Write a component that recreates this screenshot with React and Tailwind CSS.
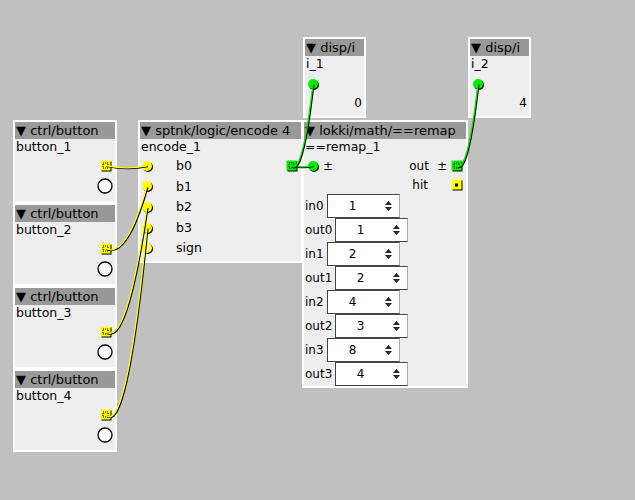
import React from 'react';

const YELLOW = '#ffff00';
const GREEN = '#00ee00';

// inlet: round jack with a dark drop shadow
function Inlet({ color, open }) {
  return (
    <svg width="13" height="13" className="shrink-0">
      <circle cx="7" cy="7" r="5" fill="#000" />
      <circle cx="6" cy="6" r="5" fill={color} />
      {open && <circle cx="6.3" cy="6.3" r="2.6" fill="#eeeeee" />}
    </svg>
  );
}

// outlet: square jack, dotted when connected
function Outlet({ color, open }) {
  return (
    <svg width="12" height="12" className="shrink-0">
      <rect x="1.5" y="1.5" width="10" height="10" fill="#000" />
      <rect x="0.5" y="0.5" width="10" height="10" fill={color} />
      {open ? (
        <rect x="4" y="4.5" width="3" height="3" fill="#000" />
      ) : (
        <rect x="3" y="3" width="5" height="5" fill="none" stroke="#000" strokeWidth="1" strokeDasharray="1 1" />
      )}
    </svg>
  );
}

function ButtonCircle() {
  return (
    <svg width="16" height="16" className="shrink-0">
      <circle cx="8" cy="8" r="7" fill="#fff" stroke="#000" strokeWidth="1.3" />
    </svg>
  );
}

function Spinner() {
  return (
    <svg width="9" height="12">
      <polygon points="1,5 8,5 4.5,1" fill="#222" />
      <polygon points="1,7 8,7 4.5,11" fill="#222" />
    </svg>
  );
}

function Node({ pos, title, name, children }) {
  return (
    <div className={`absolute flex flex-col border-2 border-white bg-[#eeeeee] ${pos}`}>
      <div className="h-[17px] shrink-0 bg-[#999999] flex items-center pl-[1px] text-[13px] whitespace-nowrap overflow-hidden">
        ▼ {title}
      </div>
      <div className="h-[17px] shrink-0 flex items-center pl-[1px] text-[12.5px] whitespace-nowrap">{name}</div>
      {children}
    </div>
  );
}

function CtrlButton({ pos, name }) {
  return (
    <Node pos={pos} title="ctrl/button" name={name}>
      <div className="h-[20px] flex items-center justify-end pr-[3px]">
        <Outlet color={YELLOW} />
      </div>
      <div className="h-[20px] flex items-center justify-end pr-[2px]">
        <ButtonCircle />
      </div>
    </Node>
  );
}

function DispI({ pos, name, value }) {
  return (
    <Node pos={pos} title="disp/i" name={name}>
      <div className="h-[22px] flex items-center pl-[2px]">
        <Inlet color={GREEN} />
      </div>
      <div className="h-[16px] flex items-center justify-end pr-[2px]">{value}</div>
    </Node>
  );
}

function ParamRow({ label, value, wide }) {
  return (
    <div className="h-6 flex items-center gap-[2px] pl-[1px]">
      <span className={wide ? 'w-[28px]' : 'w-[20px]'}>{label}</span>
      <div className="w-[73px] h-6 flex items-center bg-white border border-[#444444] border-r-[#aaaaaa]">
        <span className="flex-1 text-center">{value}</span>
        <span className="w-[22px] flex justify-center">
          <Spinner />
        </span>
      </div>
    </div>
  );
}

function Wire({ x1, y1, x2, y2, color }) {
  const cx = (x1 + x2) / 2;
  const cy = Math.max(y1, y2) + Math.abs(y2 - y1) * 0.1 + Math.abs(x2 - x1) * 0.1;
  const d = `M${x1} ${y1} Q${cx} ${cy} ${x2} ${y2}`;
  return (
    <g fill="none">
      <path d={d} stroke="#000" strokeWidth="1.5" transform="translate(0.8 0.8)" />
      <path d={d} stroke={color} strokeWidth="1.3" />
    </g>
  );
}

const encodeInputs = ['b0', 'b1', 'b2', 'b3', 'sign'];
const params = [
  ['in0', 1], ['out0', 1], ['in1', 2], ['out1', 2],
  ['in2', 4], ['out2', 3], ['in3', 8], ['out3', 4],
];

export default function App() {
  return (
    <div className="relative w-[635px] h-[500px] overflow-hidden bg-[#c0c0c0] text-black text-[12px] leading-none font-['DejaVu_Sans',sans-serif]">
      <CtrlButton pos="left-[13px] top-[120px] w-[104px] h-[83px]" name="button_1" />
      <CtrlButton pos="left-[13px] top-[203px] w-[104px] h-[83px]" name="button_2" />
      <CtrlButton pos="left-[13px] top-[286px] w-[104px] h-[83px]" name="button_3" />
      <CtrlButton pos="left-[13px] top-[369px] w-[104px] h-[83px]" name="button_4" />

      <Node pos="left-[138px] top-[120px] w-[165px] h-[143px]" title="sptnk/logic/encode 4" name="encode_1">
        {encodeInputs.map((b, i) => (
          <div key={b} className="h-[20.6px] shrink-0 flex items-center pl-[1px] pr-[3px]">
            <Inlet color={YELLOW} open={b === 'sign'} />
            <span className="ml-[22px] text-[12.5px]">{b}</span>
            {i === 0 && (
              <span className="ml-auto flex">
                <Outlet color={GREEN} />
              </span>
            )}
          </div>
        ))}
      </Node>

      <DispI pos="left-[303px] top-[37px] w-[63px] h-[81px]" name="i_1" value="0" />
      <DispI pos="left-[468px] top-[37px] w-[63px] h-[81px]" name="i_2" value="4" />

      <Node pos="left-[302px] top-[120px] w-[166px] h-[268px]" title="lokki/math/==remap" name="==remap_1">
        <div className="h-[20px] shrink-0 flex items-center pl-[3px] pr-[3px]">
          <Inlet color={GREEN} />
          <span className="ml-[3px]">±</span>
          <span className="ml-auto">out</span>
          <span className="ml-[8px] mr-[4px]">±</span>
          <Outlet color={GREEN} />
        </div>
        <div className="h-[18px] shrink-0 flex items-center justify-end pr-[3px]">
          <span className="mr-[23px]">hit</span>
          <Outlet color={YELLOW} open />
        </div>
        {params.map(([label, value]) => (
          <ParamRow key={label} label={label} value={value} wide={label.startsWith('out')} />
        ))}
      </Node>

      <svg className="absolute left-0 top-0 pointer-events-none" width="635" height="500">
        <Wire x1={105.5} y1={165.5} x2={147} y2={165.8} color={YELLOW} />
        <Wire x1={105.5} y1={248.5} x2={147} y2={186.4} color={YELLOW} />
        <Wire x1={105.5} y1={331.5} x2={147} y2={207} color={YELLOW} />
        <Wire x1={105.5} y1={414.5} x2={147} y2={227.6} color={YELLOW} />
        <Wire x1={291.5} y1={165.8} x2={313} y2={165.5} color={GREEN} />
        <Wire x1={291.5} y1={165.8} x2={313} y2={83.5} color={GREEN} />
        <Wire x1={456.5} y1={165.5} x2={478} y2={83.5} color={GREEN} />
      </svg>
    </div>
  );
}
